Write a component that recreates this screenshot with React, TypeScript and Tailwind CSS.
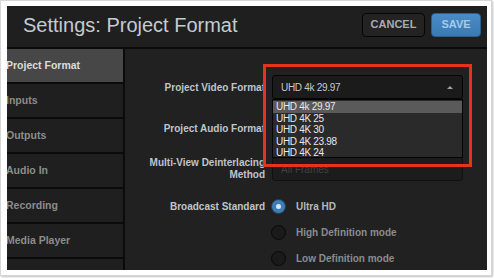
const sans = { fontFamily: '"Liberation Sans", Arial, sans-serif' };

const navItems = ['Project Format', 'Inputs', 'Outputs', 'Audio In', 'Recording', 'Media Player', ''];
const formats = ['UHD 4k 29.97', 'UHD 4K 25', 'UHD 4K 30', 'UHD 4K 23.98', 'UHD 4K 24'];

function Radio({ on, label }: { on?: boolean; label: string }) {
  return (
    <div className="flex items-center gap-[10px] h-[26px]">
      {on ? (
        <div className="w-[15px] h-[15px] rounded-full bg-[#3f7db4] border border-[#1b3f60] flex items-center justify-center">
          <div className="w-[5px] h-[5px] rounded-full bg-[#d8e6f2]" />
        </div>
      ) : (
        <div className="w-[15px] h-[15px] rounded-full bg-[#1a1a1a] border border-[#080808]" />
      )}
      <span className={`text-[10px] font-bold ${on ? 'text-[#b4b8bc]' : 'text-[#8a8c8e]'}`}>{label}</span>
    </div>
  );
}

export default function App() {
  return (
    <div className="w-[494px] h-[278px] bg-white" style={sans}>
      <div className="w-[492px] h-[276px] border border-[#d6d6d6] shadow-[1px_1px_2px_rgba(0,0,0,0.25)] pt-[5px] pl-[6px]">
        <div className="w-[480px] h-[264px] bg-[#212121] flex flex-col overflow-hidden">
          {/* header */}
          <div className="h-[43px] shrink-0 flex items-center justify-between pl-[16px] pr-[6px] border-b-2 border-[#0b0b0b] bg-[#1f1f1f]">
            <h1 className="text-[20px] text-[#c3cbd3] leading-none -mt-[4px]">Settings: Project Format</h1>
            <div className="flex gap-[6px] -mt-[4px]">
              <button className="w-[63px] h-[24px] rounded-[4px] bg-[#232323] border border-[#050505] text-[11px] font-bold text-[#a8acb0]">
                CANCEL
              </button>
              <button className="w-[50px] h-[24px] rounded-[4px] bg-gradient-to-b from-[#4b8cc6] to-[#3a79b1] border border-[#2c5f8c] text-[11px] font-bold text-[#a6cbea]">
                SAVE
              </button>
            </div>
          </div>

          <div className="flex flex-1 min-h-0">
            {/* sidebar */}
            <div className="w-[118px] shrink-0 border-r-2 border-[#0b0b0b] flex flex-col">
              {navItems.map((item, i) => (
                <div
                  key={i}
                  className={`h-[35px] shrink-0 flex items-center border-b-2 border-[#0b0b0b] text-[10.5px] font-bold ${
                    i === 0 ? 'bg-[#474747] text-[#dcdcdc]' : 'bg-[#1f1f1f] text-[#8c8c8c]'
                  }`}
                >
                  <span className="-ml-[1px]">{item}</span>
                </div>
              ))}
            </div>

            {/* content */}
            <div className="relative flex-1 pt-[26px]">
              <div className="grid grid-cols-[140px_191px] gap-x-[7px] gap-y-[17px] items-center">
                <div className="text-right text-[10px] font-bold text-[#bfc5cb]">Project Video Format</div>
                <div className="h-[24px] rounded-[3px] bg-[#1b1b1b] border border-[#050505] flex items-center justify-between pl-[8px] pr-[9px]">
                  <span className="text-[10px] text-[#c8c8c8] tracking-[-0.3px]">UHD 4k 29.97</span>
                  <span className="w-0 h-0 border-l-[3px] border-r-[3px] border-b-[3px] border-l-transparent border-r-transparent border-b-[#a0a0a0]" />
                </div>

                <div className="text-right text-[10px] font-bold text-[#bfc5cb]">Project Audio Format</div>
                <div className="h-[24px] rounded-[3px] bg-[#1b1b1b] border border-[#050505]" />

                <div className="text-right text-[10px] font-bold text-[#bfc5cb] leading-[12px]">
                  Multi-View Deinterlacing
                  <br />
                  Method
                </div>
                <div className="h-[24px] rounded-[3px] bg-[#1c1c1c] border border-[#111] flex items-center pl-[8px]">
                  <span className="text-[10px] text-[#404040]">All Frames</span>
                </div>

                <div className="text-right text-[10px] font-bold text-[#bfc5cb] self-start pt-[6px] -mt-[5px]">Broadcast Standard</div>
                <div className="flex flex-col -mt-[5px] -ml-[1px]">
                  <Radio on label="Ultra HD" />
                  <Radio label="High Definition mode" />
                  <Radio label="Low Definition mode" />
                </div>
              </div>

              {/* open dropdown list */}
              <div className="absolute left-[147px] top-[50px] w-[191px] h-[59px] bg-[#2a2a2a] border border-[#050505] py-[1px]">
                {formats.map((f, i) => (
                  <div
                    key={f}
                    className={`h-[11.5px] leading-[11.5px] pl-[3px] text-[10px] tracking-[-0.3px] text-[#e8e8e8] ${
                      i === 0 ? 'bg-[#5a5a5a]' : ''
                    }`}
                  >
                    {f}
                  </div>
                ))}
              </div>

              {/* annotation box */}
              <div className="absolute left-[138px] top-[15px] w-[209px] h-[103px] border-[3px] border-[#e8321c]" />
            </div>
          </div>
        </div>
      </div>
    </div>
  );
}
